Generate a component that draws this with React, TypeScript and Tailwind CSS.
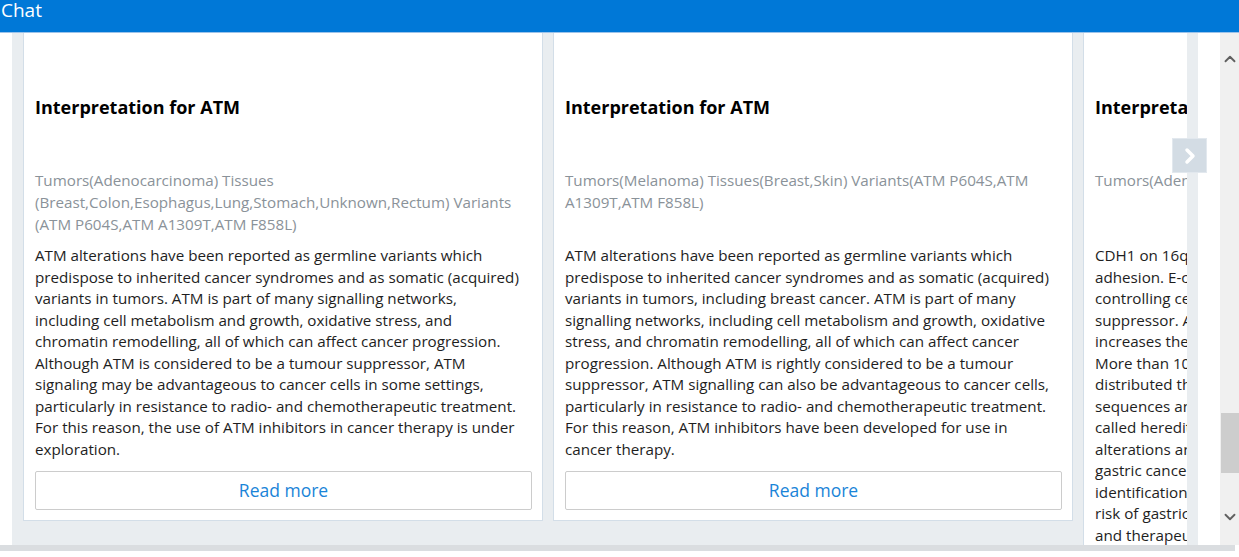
import { ChevronRight, ChevronUp, ChevronDown } from "lucide-react";

const cards = [
  {
    title: "Interpretation for ATM",
    meta: [
      "Tumors(Adenocarcinoma) Tissues",
      "(Breast,Colon,Esophagus,Lung,Stomach,Unknown,Rectum) Variants",
      "(ATM P604S,ATM A1309T,ATM F858L)",
    ],
    body: [
      "ATM alterations have been reported as germline variants which",
      "predispose to inherited cancer syndromes and as somatic (acquired)",
      "variants in tumors. ATM is part of many signalling networks,",
      "including cell metabolism and growth, oxidative stress, and",
      "chromatin remodelling, all of which can affect cancer progression.",
      "Although ATM is considered to be a tumour suppressor, ATM",
      "signaling may be advantageous to cancer cells in some settings,",
      "particularly in resistance to radio- and chemotherapeutic treatment.",
      "For this reason, the use of ATM inhibitors in cancer therapy is under",
      "exploration.",
    ],
  },
  {
    title: "Interpretation for ATM",
    meta: [
      "Tumors(Melanoma) Tissues(Breast,Skin) Variants(ATM P604S,ATM",
      "A1309T,ATM F858L)",
    ],
    body: [
      "ATM alterations have been reported as germline variants which",
      "predispose to inherited cancer syndromes and as somatic (acquired)",
      "variants in tumors, including breast cancer. ATM is part of many",
      "signalling networks, including cell metabolism and growth, oxidative",
      "stress, and chromatin remodelling, all of which can affect cancer",
      "progression. Although ATM is rightly considered to be a tumour",
      "suppressor, ATM signalling can also be advantageous to cancer cells,",
      "particularly in resistance to radio- and chemotherapeutic treatment.",
      "For this reason, ATM inhibitors have been developed for use in",
      "cancer therapy.",
    ],
  },
  {
    title: "Interpretation for CDH1",
    meta: ["Tumors(Adenocarcinoma) Tissues(Stomach)"],
    body: [
      "CDH1 on 16q22.1 encodes E-cadherin, a protein of cell-cell",
      "adhesion. E-cadherin is a transmembrane glycoprotein",
      "controlling cell polarity and acts as a tumour",
      "suppressor. A germline mutation in the CDH1 gene",
      "increases the risk of developing diffuse gastric cancer.",
      "More than 100 germline CDH1 mutations have been",
      "distributed throughout the gene, including splice-site",
      "sequences and large deletions. This syndrome is",
      "called hereditary diffuse gastric cancer. Somatic CDH1",
      "alterations are common in sporadic lobular breast and",
      "gastric cancers. Early and accurate genetic testing and",
      "identification of mutation carriers can reduce the",
      "risk of gastric cancer through surveillance, prophylactic",
      "and therapeutic options.",
      "",
    ],
  },
];

function Card({ card, showButton }: { card: (typeof cards)[number]; showButton: boolean }) {
  return (
    <div className="w-[520px] shrink-0 bg-white border border-[#d3dee8] pt-[81px] pb-[10px] pl-[11px] pr-[10px]">
      <h3 className="text-[18px] leading-[24px] font-bold text-black whitespace-nowrap">{card.title}</h3>
      <div className="mt-[50px] h-[76px] text-[15.2px] leading-[22px] text-[#8a9299] whitespace-nowrap">
        {card.meta.map((line, i) => (
          <div key={i}>{line}</div>
        ))}
      </div>
      <div className="text-[15.2px] leading-[21.5px] text-[#1e1e1e] whitespace-nowrap">
        {card.body.map((line, i) => (
          <div key={i}>{line || "\u00a0"}</div>
        ))}
      </div>
      {showButton && (
        <button className="mt-[11px] w-full h-[39px] border border-[#cccccc] rounded-[2px] bg-white text-[17.5px] text-[#1a84d8]">
          Read more
        </button>
      )}
    </div>
  );
}

export default function App() {
  return (
    <div className="w-[1239px] h-[557px] overflow-hidden bg-white" style={{ fontFamily: '"Open Sans", "Noto Sans", sans-serif' }}>
      <div className="h-[33px] bg-[#0078d7] border-b border-[#9cc3ea] text-white text-[19px] leading-[20px] pl-px">
        Chat
      </div>
      <div className="flex h-[512px]">
        <div className="w-[12px] shrink-0 bg-white" />
        <div className="relative w-[1186px] shrink-0 bg-[#e9edf0] px-[11px]">
          <div className="h-full overflow-hidden">
            <div className="flex items-start gap-[10px] -mt-[20px]">
              {cards.map((card, i) => (
                <Card key={i} card={card} showButton={i < 2} />
              ))}
            </div>
          </div>
          <button className="absolute left-[1160px] top-[105px] w-[35px] h-[35px] flex items-center justify-center bg-[#d3dce4] border border-[#e2e8ee]">
            <ChevronRight className="w-[24px] h-[24px] text-white" strokeWidth={3.5} />
          </button>
        </div>
        <div className="w-[22px] shrink-0 bg-white" />
        <div className="w-[19px] shrink-0 bg-[#f0f0f0] flex flex-col items-center">
          <ChevronUp className="mt-[17px] w-[18px] h-[18px] text-[#606060]" strokeWidth={2.5} />
          <div className="mt-[345px] self-end w-[18px] h-[60px] bg-[#cdcdcd]" />
          <ChevronDown className="mt-[35px] w-[18px] h-[18px] text-[#606060]" strokeWidth={2.5} />
        </div>
      </div>
      <div className="w-[1235px] h-[6px] bg-[#dadde0]" />
    </div>
  );
}
